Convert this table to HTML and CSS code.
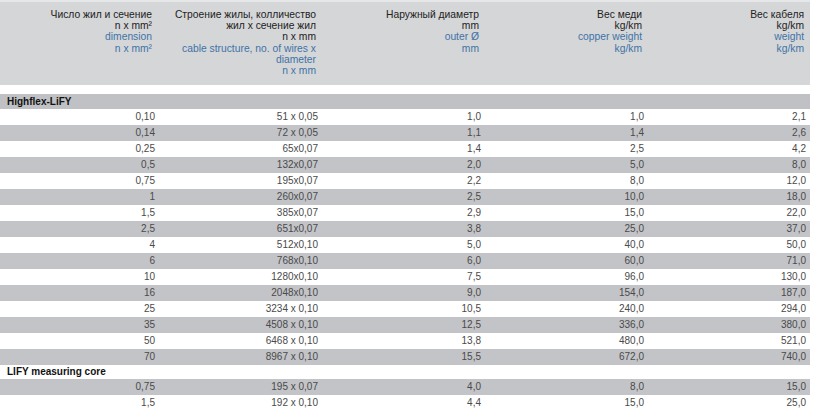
FILE: index.html
```html
<!DOCTYPE html>
<html lang="ru">
<head>
<meta charset="utf-8">
<title>Highflex-LiFY</title>
<link rel="stylesheet" href="styles.css">
</head>
<body>
<table class="spec">
  <colgroup>
    <col class="c1"><col class="c2"><col class="c3"><col class="c4"><col class="c5">
  </colgroup>
  <thead>
    <tr class="head">
      <th>Число жил и сечение<br>n x mm²<br><span class="en">dimension<br>n x mm²</span></th>
      <th>Строение жилы, колличество<br>жил х сечение жил<br>n x mm<br><span class="en">cable structure, no. of wires x<br>diameter<br>n x mm</span></th>
      <th>Наружный диаметр<br>mm<br><span class="en">outer Ø<br>mm</span></th>
      <th>Вес меди<br>kg/km<br><span class="en">copper weight<br>kg/km</span></th>
      <th>Вес кабеля<br>kg/km<br><span class="en">weight<br>kg/km</span></th>
    </tr>
    <tr class="gap"><td colspan="5"></td></tr>
  </thead>
  <tbody>
    <tr class="section grey"><td colspan="5">Highflex-LiFY</td></tr>
    <tr class="row"><td>0,10</td><td>51 x 0,05</td><td>1,0</td><td>1,0</td><td>2,1</td></tr>
    <tr class="row grey"><td>0,14</td><td>72 x 0,05</td><td>1,1</td><td>1,4</td><td>2,6</td></tr>
    <tr class="row"><td>0,25</td><td>65x0,07</td><td>1,4</td><td>2,5</td><td>4,2</td></tr>
    <tr class="row grey"><td>0,5</td><td>132x0,07</td><td>2,0</td><td>5,0</td><td>8,0</td></tr>
    <tr class="row"><td>0,75</td><td>195x0,07</td><td>2,2</td><td>8,0</td><td>12,0</td></tr>
    <tr class="row grey"><td>1</td><td>260x0,07</td><td>2,5</td><td>10,0</td><td>18,0</td></tr>
    <tr class="row"><td>1,5</td><td>385x0,07</td><td>2,9</td><td>15,0</td><td>22,0</td></tr>
    <tr class="row grey"><td>2,5</td><td>651x0,07</td><td>3,8</td><td>25,0</td><td>37,0</td></tr>
    <tr class="row"><td>4</td><td>512x0,10</td><td>5,0</td><td>40,0</td><td>50,0</td></tr>
    <tr class="row grey"><td>6</td><td>768x0,10</td><td>6,0</td><td>60,0</td><td>71,0</td></tr>
    <tr class="row"><td>10</td><td>1280x0,10</td><td>7,5</td><td>96,0</td><td>130,0</td></tr>
    <tr class="row grey"><td>16</td><td>2048x0,10</td><td>9,0</td><td>154,0</td><td>187,0</td></tr>
    <tr class="row"><td>25</td><td>3234 x 0,10</td><td>10,5</td><td>240,0</td><td>294,0</td></tr>
    <tr class="row grey"><td>35</td><td>4508 x 0,10</td><td>12,5</td><td>336,0</td><td>380,0</td></tr>
    <tr class="row"><td>50</td><td>6468 x 0,10</td><td>13,8</td><td>480,0</td><td>521,0</td></tr>
    <tr class="row grey"><td>70</td><td>8967 x 0,10</td><td>15,5</td><td>672,0</td><td>740,0</td></tr>
    <tr class="section section-2"><td colspan="5">LIFY measuring core</td></tr>
    <tr class="row grey"><td>0,75</td><td>195 x 0,07</td><td>4,0</td><td>8,0</td><td>15,0</td></tr>
    <tr class="row"><td>1,5</td><td>192 x 0,10</td><td>4,4</td><td>15,0</td><td>25,0</td></tr>
  </tbody>
</table>
</body>
</html>
```

FILE: styles.css
```css
html, body {
  margin: 0;
  padding: 0;
  background: #ffffff;
}

body {
  font-family: "Liberation Sans", Arial, sans-serif;
  color: #222;
}

.spec {
  width: 810px;
  border-collapse: collapse;
  table-layout: fixed;
}

.c1 { width: 158px; }
.c2 { width: 163px; }
.c3 { width: 163px; }
.c4 { width: 163px; }
.c5 { width: 163px; }

.head th {
  height: 84px;
  vertical-align: top;
  text-align: right;
  font-weight: normal;
  font-size: 10.3px;
  line-height: 11.2px;
  color: #222;
  background: #d5d6d8;
  border-top: 2px solid #e6e7e8;
  padding: 7px 5px 0 0;
  box-sizing: border-box;
}

.head th:first-child {
  padding-right: 6px;
}

.head th:last-child {
  padding-right: 6px;
}

.en {
  color: #3e73a6;
}

.gap td {
  height: 9px;
  padding: 0;
}

.section td {
  height: 14px;
  padding: 0 0 0 7px;
  font-size: 10px;
  font-weight: bold;
  color: #111;
  line-height: 14px;
}

.section.grey td {
  height: 15px;
  background: #c0c1c4;
}

.row td {
  height: 16px;
  padding: 0 3px 0 0;
  text-align: right;
  font-size: 10px;
  line-height: 16px;
  color: #4a4a4a;
  box-sizing: border-box;
}

.row td:last-child {
  padding-right: 4px;
}

.row.grey td {
  background: #c3c4c7;
}
```
